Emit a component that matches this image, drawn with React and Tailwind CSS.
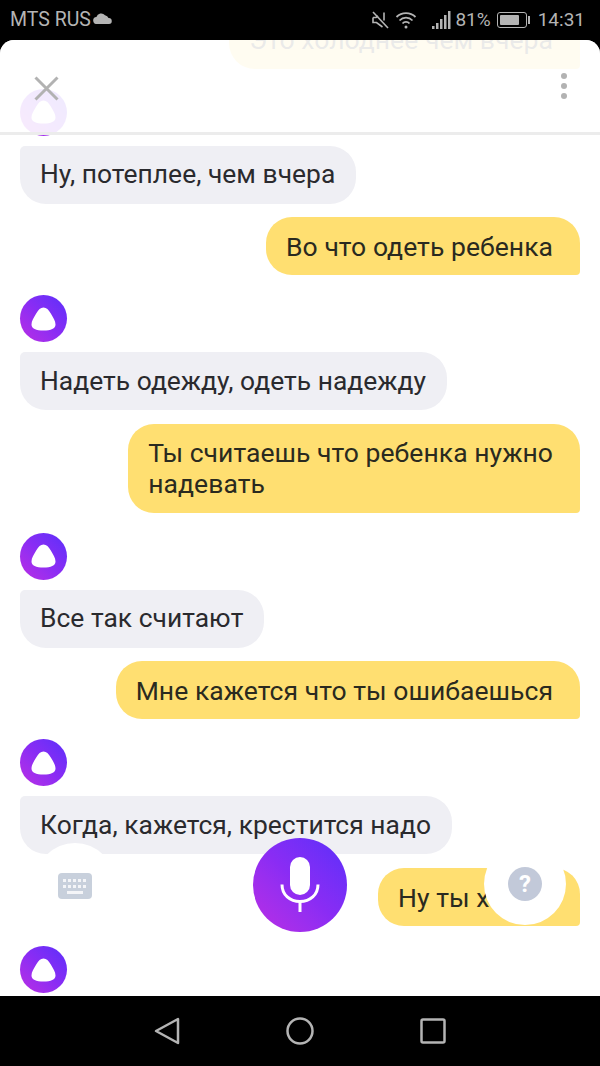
import React from 'react';

const font = "font-['Roboto',sans-serif]";
const purple = 'bg-gradient-to-tr from-[#bb2be4] via-[#8a2cf4] to-[#5a2dfa]';

function AliceLogo({ className }) {
  return (
    <div className={`w-[47px] h-[47px] rounded-full flex items-center justify-center ${purple} ${className}`}>
      <svg width="25" height="24" viewBox="0 0 25 24">
        <path d="M12.500 0.500C15.500 0.500 17.500 2.500 19.800 6.500C22.200 10.500 24.500 14 24.500 17.500C24.500 21.500 20 23.500 12.500 23.500C5 23.500 0.500 21.500 0.500 17.500C0.500 14 2.800 10.500 5.200 6.500C7.500 2.500 9.500 0.500 12.500 0.500Z" fill="#fff" />
      </svg>
    </div>
  );
}

function Alice({ children }) {
  return (
    <div className="flex flex-col items-start">
      <AliceLogo className="mt-5" />
      {children && (
        <div className="mt-[10px] bg-[#efeff4] rounded-[26px] rounded-tl-[5px] pl-5 pr-[21px] py-[13.5px] text-[26.4px] tracking-[0.03px] leading-[31px] text-[#2a2a2e]">
          {children}
        </div>
      )}
    </div>
  );
}

function User({ children, width }) {
  return (
    <div className="flex justify-end mt-[13.6px]">
      <div className={`bg-[#ffdf71] rounded-[26px] rounded-br-[4px] pl-5 pr-[27px] py-[13.5px] text-[26.5px] tracking-[0.05px] leading-[31px] whitespace-nowrap text-[#2a2a20] ${width || ''}`}>
        {children}
      </div>
    </div>
  );
}

export default function App() {
  return (
    <div className={`w-[600px] h-[1066px] flex flex-col bg-black overflow-hidden ${font}`}>
      {/* status bar */}
      <div className="h-10 shrink-0 flex items-center px-[10px] text-[#b4b4b4] text-[19.5px]">
        <span>MTS RUS</span>
        <svg width="19" height="11" viewBox="0 0 19 11" className="ml-[2px] mb-[3px]" fill="#b4b4b4">
          <path d="M4 11a3.500 3.500 0 0 1-.6-7A5 5 0 0 1 12 2.200 4.400 4.400 0 0 1 15.500 5 3 3 0 0 1 16 11Z" />
        </svg>
        <div className="ml-auto flex items-center text-[19px]">
          <svg width="20" height="20" viewBox="0 0 20 20" fill="none" stroke="#b4b4b4" strokeWidth="1.600" className="mr-[4px]">
            <path d="M2 2l15 16" />
            <path d="M2 7.500h3l2 -1.500M13 2.500v8M2 7.500v5h3.500l6 4.500" />
          </svg>
          <svg width="22" height="18" viewBox="0 0 22 18" fill="none" stroke="#b4b4b4" strokeWidth="1.800" className="mr-[15px]">
            <path d="M1.500 6a13.500 13.500 0 0 1 19 0M4.500 9.500a9 9 0 0 1 13 0M7.500 12.500a4.500 4.500 0 0 1 7 0" />
            <circle cx="11" cy="16" r="1.500" fill="#b4b4b4" stroke="none" />
          </svg>
          <svg width="19" height="18" viewBox="0 0 19 18" fill="#b4b4b4" className="mr-[4px]">
            <rect x="0" y="15" width="2.500" height="3" />
            <rect x="4" y="12" width="2.500" height="6" />
            <rect x="8" y="8" width="2.500" height="10" />
            <rect x="12" y="4" width="2.500" height="14" />
            <rect x="16" y="0" width="2.500" height="18" />
          </svg>
          <span>81%</span>
          <div className="ml-[6px] w-[30px] h-[16px] rounded-[3px] border border-[#b4b4b4] p-[2px]">
            <div className="h-full w-[81%] bg-[#b4b4b4] rounded-[1px]" />
          </div>
          <div className="w-[2px] h-[8px] ml-[1px] bg-[#b4b4b4]" />
          <span className="ml-[8px] mr-[5px]">14:31</span>
        </div>
      </div>

      {/* card */}
      <div className="relative flex-1 bg-white rounded-t-[14px] overflow-hidden">
        <div className="-mt-[42.9px] px-5">
          <User>Это холоднее чем вчера</User>
          <Alice>Ну, потеплее, чем вчера</Alice>
          <User>Во что одеть ребенка</User>
          <Alice>Надеть одежду, одеть надежду</Alice>
          <User>Ты считаешь что ребенка нужно<br />надевать</User>
          <Alice>Все так считают</Alice>
          <User>Мне кажется что ты ошибаешься</User>
          <Alice>Когда, кажется, крестится надо</Alice>
          <User width="w-[202px]">Ну ты х</User>
          <Alice />
        </div>

        {/* top bar lies over the scrolled messages */}
        <div className="absolute top-0 inset-x-0 h-[95px] bg-white/90 border-b-[3px] border-[#ececec] flex items-start justify-between pl-[34px] pr-[33px] pt-[36px]">
          <svg width="25" height="25" viewBox="0 0 25 25" stroke="#b2b2b2" strokeWidth="3">
            <path d="M1.500 1.500l22 22M23.500 1.500l-22 22" />
          </svg>
          <div className="flex flex-col gap-[4px] -mt-[3px]">
            <span className="w-[6px] h-[6px] rounded-full bg-[#b2b2b2]" />
            <span className="w-[6px] h-[6px] rounded-full bg-[#b2b2b2]" />
            <span className="w-[6px] h-[6px] rounded-full bg-[#b2b2b2]" />
          </div>
        </div>

        {/* bottom controls over the chat */}
        <div className="absolute left-[35px] top-[803px] w-20 h-20 rounded-full bg-white flex items-center justify-center pt-[5px]">
          <svg width="34" height="26" viewBox="0 0 34 26">
            <rect width="34" height="26" rx="4" fill="#c8d0dc" />
            <g fill="#fff" opacity="0.8">
              <rect x="5" y="6" width="3" height="3" />
              <rect x="10" y="6" width="3" height="3" />
              <rect x="15" y="6" width="3" height="3" />
              <rect x="20" y="6" width="3" height="3" />
              <rect x="25" y="6" width="3" height="3" />
              <rect x="5" y="12" width="3" height="3" />
              <rect x="10" y="12" width="3" height="3" />
              <rect x="15" y="12" width="3" height="3" />
              <rect x="20" y="12" width="3" height="3" />
              <rect x="25" y="12" width="3" height="3" />
              <rect x="9" y="18" width="16" height="3" />
            </g>
          </svg>
        </div>
        <div className={`absolute left-[253px] top-[798px] w-[94px] h-[94px] rounded-full flex items-center justify-center ${purple}`}>
          <svg width="40" height="56" viewBox="0 0 40 56" fill="none">
            <rect x="10" y="0" width="20" height="38" rx="10" fill="#fff" />
            <path d="M2 27.500C2 38 10 44.500 20 44.500C30 44.500 38 38 38 27.500" stroke="#fff" strokeWidth="3" />
            <path d="M20 44v11" stroke="#fff" strokeWidth="3" />
          </svg>
        </div>
        <div className="absolute left-[484px] top-[803px] w-[82px] h-[82px] rounded-full bg-white flex items-center justify-center">
          <div className="w-[34px] h-[34px] rounded-full bg-[#c2c9d9] text-white text-[24px] font-bold leading-none flex items-center justify-center">?</div>
        </div>
      </div>

      {/* nav bar */}
      <div className="h-[70px] shrink-0 flex items-center justify-center gap-[106px]">
        <svg width="26" height="28" viewBox="0 0 26 28" fill="none" stroke="#b4b4b4" strokeWidth="2.500" strokeLinejoin="round">
          <path d="M24 2v24L2 14Z" />
        </svg>
        <svg width="28" height="28" viewBox="0 0 28 28" fill="none" stroke="#b4b4b4" strokeWidth="2.500">
          <circle cx="14" cy="14" r="12.500" />
        </svg>
        <svg width="26" height="26" viewBox="0 0 26 26" fill="none" stroke="#b4b4b4" strokeWidth="2.500">
          <rect x="1.500" y="1.500" width="23" height="23" rx="1.500" />
        </svg>
      </div>
    </div>
  );
}
